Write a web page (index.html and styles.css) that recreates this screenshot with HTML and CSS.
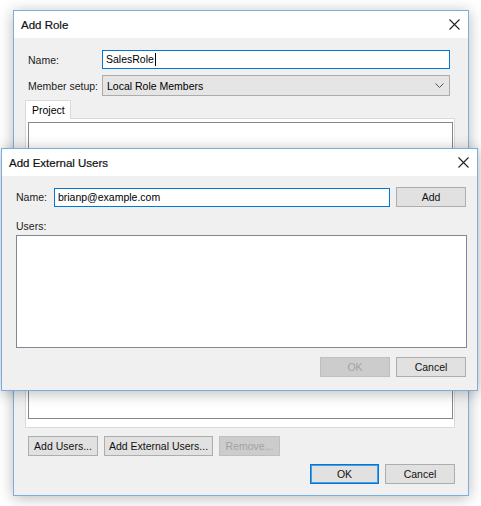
FILE: index.html
```html
<!DOCTYPE html>
<html>
<head>
<meta charset="utf-8">
<title>Add Role</title>
<link rel="stylesheet" href="styles.css">
</head>
<body>
  <div class="window main">
    <div class="titlebar">
      <span class="title">Add Role</span>
      <svg class="close" width="11" height="11" viewBox="0 0 11 11"><path d="M0.5 0.5L10.5 10.5M10.5 0.5L0.5 10.5" stroke="#222" stroke-width="1.1" fill="none"/></svg>
    </div>
    <div class="content role-content">
      <div class="fields">
        <label class="lbl">Name:</label>
        <div class="textbox focused">SalesRole<span class="caret"></span></div>
        <label class="lbl">Member setup:</label>
        <div class="combo">
          <span>Local Role Members</span>
          <svg width="9" height="5" viewBox="0 0 9 5"><path d="M0.5 0.5L4.5 4.5L8.5 0.5" stroke="#555" stroke-width="1" fill="none"/></svg>
        </div>
      </div>
      <div class="tabs">
        <div class="tab">Project</div>
      </div>
      <div class="tabpage">
        <div class="listbox members"></div>
      </div>
      <div class="btnrow">
        <button class="btn w70">Add Users...</button>
        <button class="btn w109">Add External Users...</button>
        <button class="btn w61 disabled">Remove...</button>
      </div>
      <div class="dialog-buttons">
        <button class="btn w69 default">OK</button>
        <button class="btn w70">Cancel</button>
      </div>
    </div>
  </div>

  <div class="window ext">
    <div class="titlebar">
      <span class="title">Add External Users</span>
      <svg class="close" width="11" height="11" viewBox="0 0 11 11"><path d="M0.5 0.5L10.5 10.5M10.5 0.5L0.5 10.5" stroke="#222" stroke-width="1.1" fill="none"/></svg>
    </div>
    <div class="content ext-content">
      <div class="namerow">
        <label class="lbl">Name:</label>
        <div class="textbox focused ext-name">brianp@example.com</div>
        <button class="btn w70">Add</button>
      </div>
      <label class="lbl users-lbl">Users:</label>
      <div class="listbox users"></div>
      <div class="dialog-buttons ext-buttons">
        <button class="btn w70 disabled">OK</button>
        <button class="btn w70">Cancel</button>
      </div>
    </div>
  </div>
</body>
</html>
```

FILE: styles.css
```css
html, body {
  margin: 0;
  padding: 0;
}

body {
  width: 481px;
  height: 506px;
  background: #ffffff;
  position: relative;
  overflow: hidden;
  font-family: "Liberation Sans", Arial, sans-serif;
  font-size: 10.5px;
  color: #000;
}

/* Windows sit on a free desktop */
.window {
  position: absolute;
  box-sizing: border-box;
  border: 1px solid #79aee0;
  background: #f0f0f0;
  display: flex;
  flex-direction: column;
  box-shadow: 0 2px 14px rgba(0, 0, 0, 0.28);
}

.main {
  left: 13px;
  top: 10px;
  width: 456px;
  height: 486px;
}

.ext {
  left: 1px;
  top: 148px;
  width: 477px;
  height: 243px;
}

.titlebar {
  height: 27px;
  flex: none;
  background: #fff;
  display: flex;
  align-items: center;
  justify-content: space-between;
  padding: 0 8px 0 7px;
}

.title {
  font-family: "Liberation Sans", Arial, sans-serif;
  font-size: 11.5px;
  color: #111;
  -webkit-text-stroke: 0.2px #111;
}

.ext .titlebar {
  padding-left: 7px;
  padding-right: 8px;
}

.content {
  flex: 1;
  display: flex;
  flex-direction: column;
}

.lbl {
  color: #1a1a1a;
}

.textbox {
  box-sizing: border-box;
  height: 19px;
  background: #fff;
  border: 1px solid #adadad;
  padding: 0 3px;
  line-height: 17px;
  display: flex;
  align-items: center;
}

.textbox.focused {
  border-color: #0078d7;
}

.caret {
  display: inline-block;
  width: 1px;
  height: 13px;
  background: #000;
  margin-left: 1px;
}

.combo {
  box-sizing: border-box;
  height: 21px;
  background: #e5e5e5;
  border: 1px solid #acacac;
  display: flex;
  align-items: center;
  justify-content: space-between;
  padding: 0 5px 0 4px;
}

/* Add Role form */
.role-content {
  padding: 12px 13px 0 11px;
}

.fields {
  display: grid;
  grid-template-columns: 74px 348px;
  row-gap: 6px;
  align-items: center;
  padding-left: 3px;
}

.tabs {
  display: flex;
  margin-top: 4px;
  height: 18px;
}

.tab {
  box-sizing: border-box;
  width: 46px;
  height: 19px;
  background: #fff;
  border: 1px solid #d9d9d9;
  border-bottom: none;
  padding: 3px 0 0 6px;
  position: relative;
  z-index: 1;
}

.tabpage {
  box-sizing: border-box;
  width: 430px;
  height: 310px;
  background: #fff;
  border: 1px solid #d9d9d9;
  padding: 3px 1px 8px 2px;
  display: flex;
}

.listbox {
  box-sizing: border-box;
  background: #fff;
  border: 1px solid #828790;
}

.members {
  flex: 1;
}

.btn {
  box-sizing: border-box;
  height: 20px;
  background: #e1e1e1;
  border: 1px solid #adadad;
  font-family: "Liberation Sans", Arial, sans-serif;
  font-size: 10.5px;
  color: #111;
  padding: 0;
  margin: 0;
}

.btn.disabled {
  background: #cccccc;
  border-color: #bfbfbf;
  color: #a3a3a3;
}

.btn.default {
  border: 1px solid #0078d7;
  box-shadow: inset 0 0 0 1px #4a9be0;
}

.w61 { width: 61px; }
.w69 { width: 69px; }
.w70 { width: 70px; }
.w109 { width: 109px; }

.btnrow {
  display: flex;
  gap: 6px;
  margin-top: 8px;
  padding-left: 3px;
}

.dialog-buttons {
  display: flex;
  justify-content: flex-end;
  gap: 6px;
  margin-top: 8px;
}

/* Add External Users form */
.ext-content {
  padding: 11px 11px 0 14px;
}

.namerow {
  display: flex;
  align-items: center;
  gap: 6px;
}

.namerow .lbl {
  width: 32px;
}

.ext-name {
  width: 337px;
}

.users-lbl {
  margin-top: 13px;
}

.users {
  width: 451px;
  height: 113px;
  margin-top: 3px;
}

.ext-buttons {
  margin-top: 9px;
  padding-right: 0;
}
```
